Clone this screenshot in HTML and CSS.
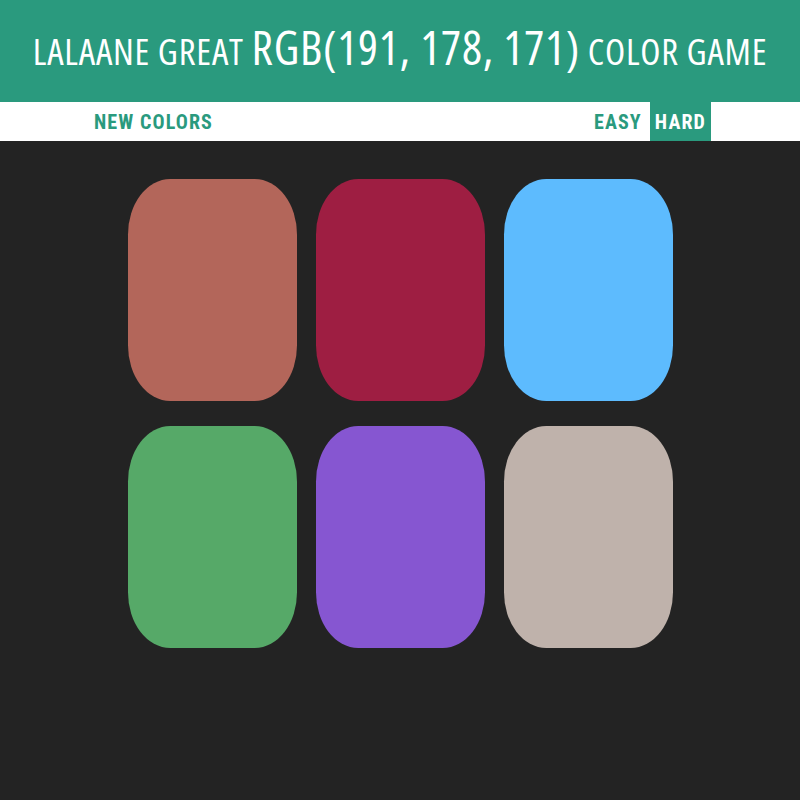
FILE: index.html
```html
<!DOCTYPE html>
<html>
<head>
<meta charset="utf-8">
<link rel="stylesheet" href="styles.css">
</head>
<body>
<header class="header">
  <h1 class="title">LALAANE GREAT <span class="rgb">RGB(191, 178, 171)</span> COLOR GAME</h1>
</header>
<nav class="stripe">
  <div class="stripe-inner">
    <button class="btn">NEW COLORS</button>
    <span class="spacer"></span>
    <button class="btn">EASY</button>
    <button class="btn selected">HARD</button>
  </div>
</nav>
<main class="board">
  <div class="square" style="background:#b3665a"></div>
  <div class="square" style="background:#9e1e42"></div>
  <div class="square" style="background:#5dbbfe"></div>
  <div class="square" style="background:#56a968"></div>
  <div class="square" style="background:#8656d1"></div>
  <div class="square" style="background:#bfb2ab"></div>
</main>
</body>
</html>
```
FILE: styles.css
```css
html, body {
  margin: 0;
  padding: 0;
  background: #232323;
}
.header {
  background: #2a9a7e;
  height: 102px;
  box-sizing: border-box;
  padding-bottom: 7px;
  display: flex;
  align-items: center;
  justify-content: center;
}
.title {
  margin: 0;
  color: #fff;
  font-family: "Open Sans", sans-serif;
  font-stretch: 75%;
  font-weight: normal;
  font-size: 37px;
  letter-spacing: 0.8px;
  white-space: nowrap;
  line-height: 1;
}
.rgb {
  font-size: 47px;
}
.stripe {
  background: #fff;
  height: 39px;
}
.stripe-inner {
  width: 622px;
  margin: 0 auto;
  height: 100%;
  display: flex;
  align-items: stretch;
}
.spacer {
  flex: 1;
}
.btn {
  border: none;
  background: none;
  color: #2a9a7e;
  font-family: "Roboto", sans-serif;
  font-stretch: 75%;
  font-weight: bold;
  font-size: 20px;
  letter-spacing: 1.1px;
  padding: 0 5px;
  margin: 0 0 0 3px;
  height: 100%;
}
.btn:first-child {
  margin: 0;
}
.btn.selected {
  background: #2a9a7e;
  color: #fff;
}
.board {
  display: grid;
  grid-template-columns: repeat(3, 169px);
  grid-auto-rows: 222px;
  column-gap: 19px;
  row-gap: 25px;
  justify-content: center;
  padding-top: 38px;
}
.square {
  border-radius: 25%;
}
```
